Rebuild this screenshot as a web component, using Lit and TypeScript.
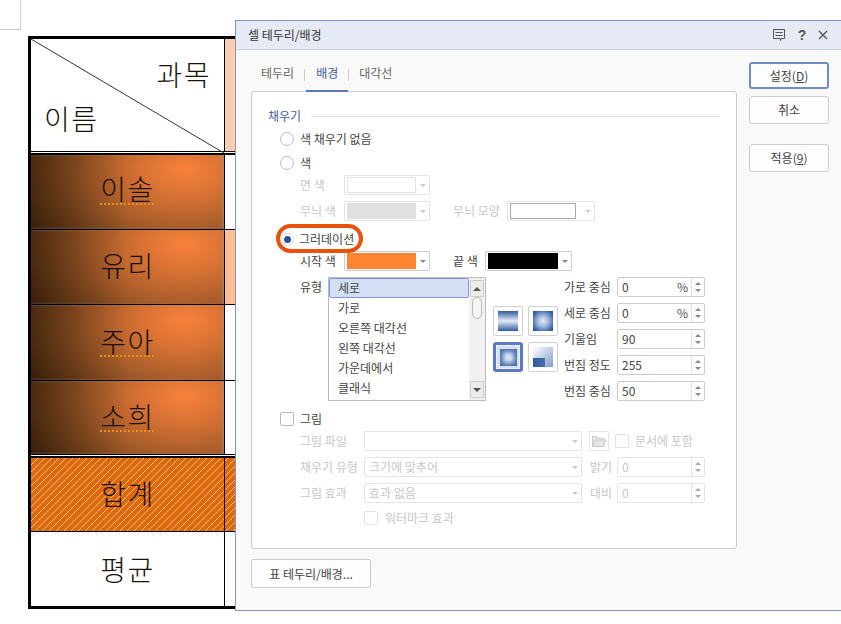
import { LitElement, html, css } from "lit";
import { customElement } from "lit/decorators.js";

const KR = `"Noto Sans CJK KR", "Noto Sans", sans-serif`;

@customElement("doc-table")
class DocTable extends LitElement {
  static styles = css`
    :host { display: block; width: 232px; margin: 6px 0 0 28px; border: solid #000; border-width: 3px 0 3px 3px; font-family: ${css([KR] as any)}; color: #1a1208; }
    .row { display: flex; border-bottom: 1px solid #000; }
    .row.last { border-bottom: 0; }
    .name { width: 193px; box-sizing: border-box; display: flex; align-items: center; justify-content: center; font-size: 28px; font-weight: 300; letter-spacing: 1.5px; line-height: 1; padding-bottom: 4px; }
    .up2 { padding-bottom: 8px; }
    .dn1 { padding-bottom: 1px; }
    .val { width: 1px; background: #000; flex: none; }
    .rest { flex: 1; }
    .h74 { height: 74px; } .h75 { height: 75px; } .h73 { height: 73px; }
    .noline { border-bottom: 0; }
    .double { height: 1px; background: #fff; border-top: 1px solid #000; border-bottom: 2px solid #000; }
    .head { height: 112px; border: 0; }
    .headcell { position: relative; width: 193px; box-sizing: border-box; font-size: 28px; font-weight: 300; letter-spacing: 1.5px; line-height: 1; display: flex; flex-direction: column; padding: 21px 13px 0 13px; }
    .headcell .t1 { align-self: flex-end; }
    .headcell .t2 { margin-top: 16px; }
    .headcell svg { position: absolute; left: 0; top: 0; }
    .peach { background: #fdcdb0; }
    .peach2 { background: #ffbd92; }
    .grad {
      background:
        linear-gradient(90deg, rgba(20,10,0,.34) 0, rgba(20,10,0,0) 50%),
        radial-gradient(ellipse 100% 165% at 80% 20%, #f8813b 0, #d97234 22%, #a85d2a 48%, #6f3f1a 76%, #3c1f0c 100%);
      box-shadow: inset -2px 0 3px rgba(160,150,140,.5);
    }
    .hatch { background: repeating-linear-gradient(135deg, #e36700 0 4.25px, #f6c9a0 4.25px 5px); }
    .sp { text-decoration: underline dotted #e8901c 1.5px; text-underline-offset: 3px; text-decoration-skip-ink: none; }
  `;
  cell(n: string, hCls: string, rest: string, opts: { sp?: boolean; flat?: boolean; nudge?: string } = {}) {
    return html`<div class="row ${hCls}">
      <div class="name ${opts.flat ? "" : "grad"} ${opts.nudge ?? ""}"><span class=${opts.sp ? "sp" : ""}>${n}</span></div>
      <div class="val"></div><div class="rest ${rest}"></div>
    </div>`;
  }
  render() {
    return html`
      <div class="row head">
        <div class="headcell">
          <svg width="193" height="114"><line x1="0" y1="0" x2="193" y2="114" stroke="#333" stroke-width="1"/></svg>
          <span class="t1">과목</span><span class="t2">이름</span>
        </div>
        <div class="val"></div><div class="rest peach"></div>
      </div>
      <div class="double"></div>
      ${this.cell("이솔", "h74", "", { sp: true, nudge: "up2" })}
      ${this.cell("유리", "h74", "peach2")}
      ${this.cell("주아", "h75", "", { sp: true })}
      ${this.cell("소희", "h73 noline", "", { sp: true })}
      <div class="double"></div>
      ${this.cell("합계", "h73 hatch", "", { flat: true })}
      ${this.cell("평균", "h74 last", "", { flat: true, nudge: "dn1" })}
    `;
  }
}

@customElement("cell-dialog")
class CellDialog extends LitElement {
  static styles = css`
    :host { position: absolute; left: 235px; top: 20px; width: 606px; height: 591px; box-sizing: border-box; border: solid #8295c4; border-width: 1px 0 1px 1px; background: #f9f9f9; font: 12px/20px ${css([KR] as any)}; color: #444; display: flex; flex-direction: column; }
    .title { height: 28px; flex: none; background: #e6eaf4; border-bottom: 1px solid #c8d0e6; display: flex; align-items: center; padding: 0 13px 0 12px; color: #333; }
    .title .tt { flex: 1; }
    .title .ic { display: flex; align-items: center; gap: 11px; }
    .q { font: bold 14px/16px "Liberation Sans", sans-serif; color: #555; width: 10px; text-align: center; }
    .main { display: flex; gap: 12px; padding-left: 15px; flex: none; }
    .left { width: 486px; }
    .tabs { display: flex; height: 41px; align-items: stretch; position: relative; color: #666; }
    .tab { padding: 13px 10px 0; box-sizing: border-box; }
    .tab.on { color: #3d5c9c; border-bottom: 2px solid #5a78c0; margin: 0 0 -1px 1px; position: relative; }
    .sep { width: 1px; height: 12px; background: #ccc; margin-top: 19px; }
    .panel { width: 486px; height: 458px; box-sizing: border-box; border: 1px solid #ccc; border-radius: 3px; background: #fff; padding-top: 14px; }
    .r { display: flex; align-items: center; height: 20px; }
    .ind { margin-left: 48px; }
    .rad { margin-left: 28px; gap: 6px; }
    .m2 { margin-top: 2px; } .m3 { margin-top: 3px; } .m4 { margin-top: 4px; } .m5 { margin-top: 5px; } .m6 { margin-top: 6px; } .m8 { margin-top: 8px; }
    .heading { margin-left: 16px; color: #3d5c9c; gap: 10px; }
    .heading i { width: 409px; height: 1px; background: #ddd; }
    .radio { width: 14px; height: 14px; box-sizing: border-box; border: 1px solid #bbb; border-radius: 50%; background: #fff; flex: none; }
    .check { width: 14px; height: 14px; box-sizing: border-box; border: 1px solid #bbb; border-radius: 2px; background: #fff; flex: none; }
    .check.dis { border-color: #e2e2e2; }
    .lb { flex: none; }
    .w44 { width: 44px; } .w64 { width: 64px; } .w54 { width: 54px; } .w32 { width: 32px; } .w27 { width: 27px; }
    .dis { color: #c6c6c6; }
    .sel { height: 20px; box-sizing: border-box; border: 1px solid #ccc; border-radius: 2px; background: #fff; display: flex; align-items: center; padding: 0 0 0 2px; flex: none; }
    .sel.d { border-color: #e4e4e4; color: #c6c6c6; }
    .sel .body { flex: 1; min-width: 0; height: 16px; line-height: 16px; }
    .sel .body span { padding-left: 2px; }
    .sel .ar { width: 13px; flex: none; display: flex; justify-content: center; }
    .tri { width: 0; height: 0; border: 3px solid transparent; border-top: 3px solid #888; border-bottom: 0; }
    .sel.d .tri { border-top-color: #ccc; }
    .up { width: 0; height: 0; border: 3px solid transparent; border-bottom: 3px solid #888; border-top: 0; }
    .w86 { width: 86px; } .w87 { width: 87px; } .w88 { width: 88px; } .w218 { width: 218px; }
    .ml23 { margin-left: 23px; }
    .swatch { height: 16px; box-sizing: border-box; border: 1px solid transparent; }
    .pillrow { position: relative; }
    .pill { position: absolute; left: -4px; top: -5px; width: 87px; height: 29px; box-sizing: border-box; border: 4px solid #e8520a; border-radius: 15px; }
    .radio.on { position: relative; border-color: #d5d5d5; display: flex; align-items: center; justify-content: center; margin-left: 1px; margin-right: -1px; width: 13px; height: 13px; }
    .radio.on::after { content: ""; width: 7px; height: 7px; border-radius: 50%; background: #2d4f9e; }
    .block { display: flex; margin: 6px 0 0 48px; height: 124px; }
    .tylb { width: 28px; flex: none; }
    .list { width: 158px; height: 124px; box-sizing: border-box; border: 1px solid #bbb; display: flex; flex: none; background: #fff; }
    .items { flex: 1; }
    .it { height: 20px; box-sizing: border-box; padding-left: 9px; line-height: 20px; }
    .it.on { background: #d3dff5; border: 1px solid #7d99d1; border-radius: 2px; line-height: 18px; padding-left: 8px; }
    .sb { width: 16px; background: #f1f1f1; display: flex; flex-direction: column; padding: 2px 1px; box-sizing: border-box; flex: none; }
    .sb .b { height: 17px; border: 1px solid #ccc; box-sizing: border-box; background: #ececec; border-radius: 1px; display: flex; align-items: center; justify-content: center; flex: none; }
    .sb .b .up { border-bottom-color: #555; border-width: 0 4px 4px; }
    .sb .b .tri { border-top-color: #555; border-width: 4px 4px 0; }
    .thumb { width: 10px; height: 22px; box-sizing: border-box; border: 1px solid #bbb; border-radius: 5px; background: #f6f6f6; margin: 0 auto; }
    .sbsp { flex: 1; }
    .sw { display: grid; grid-template-columns: 30px 30px; grid-auto-rows: 30px; column-gap: 5px; row-gap: 6px; padding: 29px 0 0 0; margin-left: 7px; flex: none; align-content: start; }
    .swb { box-sizing: border-box; border: 1px solid #d0d0d0; border-radius: 2px; background: #fff; display: flex; align-items: center; justify-content: center; }
    .swb b { display: block; width: 20px; height: 20px; }
    .g1 { background: linear-gradient(180deg, #2f5b9e, #e6ecf8 50%, #2f5b9e); }
    .g2 { background: radial-gradient(circle, #e4ebf8 0, #9db6dd 40%, #2f5b9e 85%); }
    .g3 { background: #dfe8f8; box-shadow: inset 0 0 5px 3px #3f69a8; }
    .g4 { background: linear-gradient(90deg, #2e5b9e, #4470b0) 0 100%/60% 45% no-repeat, linear-gradient(135deg, #f4f6fc 10%, #7e9ccb); }
    .swb.sel3 { background: #d5e0f6; border: 3px solid #5c7ac2; border-radius: 3px; }
    .swb.sel3 span { display: flex; align-items: center; justify-content: center; width: 22px; height: 22px; border: 1px dotted #fff; box-sizing: content-box; }
    .swb.sel3 b { width: 17px; height: 17px; }
    .fields { margin-left: 6px; display: flex; flex-direction: column; gap: 6px; }
    .f { display: flex; align-items: center; height: 20px; }
    .f .lb { width: 53px; }
    .inp { width: 88px; height: 20px; box-sizing: border-box; border: 1px solid #ccc; border-radius: 2px; background: #fff; display: flex; align-items: center; padding-left: 4px; flex: none; }
    .inp .v { flex: 1; }
    .inp .pc { padding-right: 3px; color: #555; }
    .spin { width: 13px; height: 18px; border-left: 1px solid #e2e2e2; display: flex; flex-direction: column; align-items: center; justify-content: space-around; padding: 2px 0; box-sizing: border-box; flex: none; }
    .inp.d { border-color: #e4e4e4; color: #c6c6c6; }
    .inp.d .tri { border-top-color: #aaa; } .inp.d .up { border-bottom-color: #aaa; }
    .ml7 { margin-left: 7px; } .ml6 { margin-left: 6px; } .ml8 { margin-left: 8px; }
    .fold { width: 20px; height: 20px; box-sizing: border-box; border: 1px solid #e4e4e4; display: flex; align-items: center; justify-content: center; flex: none; }
    .wm { margin-left: 112px; gap: 7px; }
    .right { width: 80px; padding-top: 12px; display: flex; flex-direction: column; flex: none; }
    .btn { box-sizing: border-box; border: 1px solid #ccc; border-radius: 3px; background: #fdfdfd; display: flex; align-items: center; justify-content: center; color: #444; height: 28px; }
    .btn.pri { border: 2px solid #6f8cc8; height: 27px; margin-bottom: 7px; }
    .mt20 { margin-top: 20px; }
    .foot { margin: 10px 0 0 15px; width: 120px; height: 29px; box-sizing: border-box; border: 1px solid #ccc; border-radius: 2px; background: #fdfdfd; display: flex; align-items: center; justify-content: center; color: #444; }
  `;
  sel(w: string, inner: unknown, d = false) {
    return html`<div class="sel ${w} ${d ? "d" : ""}"><div class="body">${inner}</div><div class="ar"><div class="tri"></div></div></div>`;
  }
  swatch(color: string, border = color, w = "100%") {
    return html`<div class="swatch" style="width:${w};background:${color};border-color:${border}"></div>`;
  }
  inp(v: string, pct = false, d = false) {
    return html`<div class="inp ${d ? "d" : ""}"><span class="v">${v}</span>${pct ? html`<span class="pc">%</span>` : ""}<div class="spin"><div class="up"></div><div class="tri"></div></div></div>`;
  }
  render() {
    const items = ["세로", "가로", "오른쪽 대각선", "왼쪽 대각선", "가운데에서", "클래식"];
    const fields: [string, string, boolean][] = [["가로 중심", "0", true], ["세로 중심", "0", true], ["기울임", "90", false], ["번짐 정도", "255", false], ["번짐 중심", "50", false]];
    return html`
      <div class="title">
        <span class="tt">셀 테두리/배경</span>
        <div class="ic">
          <svg width="14" height="14" viewBox="0 0 14 14" fill="none" stroke="#555" stroke-width="1"><path d="M1.500 1.500h11v9H9.500l-1 2v-2h-7z"/><path d="M3.500 4.500h7M3.500 7.500h7"/></svg>
          <span class="q">?</span>
          <svg width="10" height="10" viewBox="0 0 10 10" stroke="#555" stroke-width="1.400"><path d="M1 1l8 8M9 1l-8 8"/></svg>
        </div>
      </div>
      <div class="main">
        <div class="left">
          <div class="tabs">
            <div class="tab">테두리</div><div class="sep"></div>
            <div class="tab on">배경</div><div class="sep"></div>
            <div class="tab">대각선</div>
          </div>
          <div class="panel">
            <div class="r heading"><span>채우기</span><i></i></div>
            <div class="r rad m3"><div class="radio"></div><span>색 채우기 없음</span></div>
            <div class="r rad m4"><div class="radio"></div><span>색</span></div>
            <div class="r ind m2 dis"><span class="lb w44">면 색</span>${this.sel("w86", this.swatch("#fff", "#e4e4e4"), true)}</div>
            <div class="r ind m6 dis"><span class="lb w44">무늬 색</span>${this.sel("w86", this.swatch("#e0e0e0"), true)}
              <span class="lb ml23 w54">무늬 모양</span>${this.sel("w88", this.swatch("#fff", "#aaa", "66px"), true)}</div>
            <div class="r rad m8 pillrow"><span class="pill"></span><div class="radio on"></div><span>그러데이션</span></div>
            <div class="r ind m2"><span class="lb w44">시작 색</span>${this.sel("w86", this.swatch("#ff8533"))}
              <span class="lb ml23 w32">끝 색</span>${this.sel("w87", this.swatch("#000"))}</div>
            <div class="block">
              <div class="tylb">유형</div>
              <div class="list">
                <div class="items">${items.map((t, i) => html`<div class="it ${i === 0 ? "on" : ""}">${t}</div>`)}</div>
                <div class="sb"><div class="b"><div class="up"></div></div><div class="thumb"></div><div class="sbsp"></div><div class="b"><div class="tri"></div></div></div>
              </div>
              <div class="sw">
                <div class="swb"><b class="g1"></b></div>
                <div class="swb"><b class="g2"></b></div>
                <div class="swb sel3"><span><b class="g3"></b></span></div>
                <div class="swb"><b class="g4"></b></div>
              </div>
              <div class="fields">
                ${fields.map(([l, v, p]) => html`<div class="f"><span class="lb">${l}</span>${this.inp(v, p)}</div>`)}
              </div>
            </div>
            <div class="r rad m8"><div class="check"></div><span>그림</span></div>
            <div class="r ind m2 dis"><span class="lb w64">그림 파일</span>${this.sel("w218", "", true)}
              <div class="fold ml7"><svg width="16" height="14" viewBox="0 0 16 14" fill="#e6e6e6" stroke="#ccc"><path d="M1.500 12.500v-10h4l1 1.500h6v2M1.500 12.500l2.500-6.500h11l-2.500 6.500z"/></svg></div>
              <div class="check dis ml6"></div><span class="lb ml6">문서에 포함</span></div>
            <div class="r ind m6 dis"><span class="lb w64">채우기 유형</span>${this.sel("w218", html`<span>크기에 맞추어</span>`, true)}
              <span class="lb ml8 w27">밝기</span>${this.inp("0", false, true)}</div>
            <div class="r ind m6 dis"><span class="lb w64">그림 효과</span>${this.sel("w218", html`<span>효과 없음</span>`, true)}
              <span class="lb ml8 w27">대비</span>${this.inp("0", false, true)}</div>
            <div class="r wm m5 dis"><div class="check dis"></div><span>워터마크 효과</span></div>
          </div>
        </div>
        <div class="right">
          <div class="btn pri"><span>설정(<u>D</u>)</span></div>
          <div class="btn">취소</div>
          <div class="btn mt20"><span>적용(<u>9</u>)</span></div>
        </div>
      </div>
      <div class="foot">표 테두리/배경...</div>
    `;
  }
}

@customElement("app-root")
class AppRoot extends LitElement {
  static styles = css`
    :host { display: block; position: relative; width: 841px; height: 624px; overflow: hidden; background: #fff; }
    .corner { width: 21px; height: 30px; box-sizing: border-box; border: solid #ccc; border-width: 0 1px 1px 0; }
  `;
  render() {
    return html`<div class="corner"></div><doc-table></doc-table><cell-dialog></cell-dialog>`;
  }
}
